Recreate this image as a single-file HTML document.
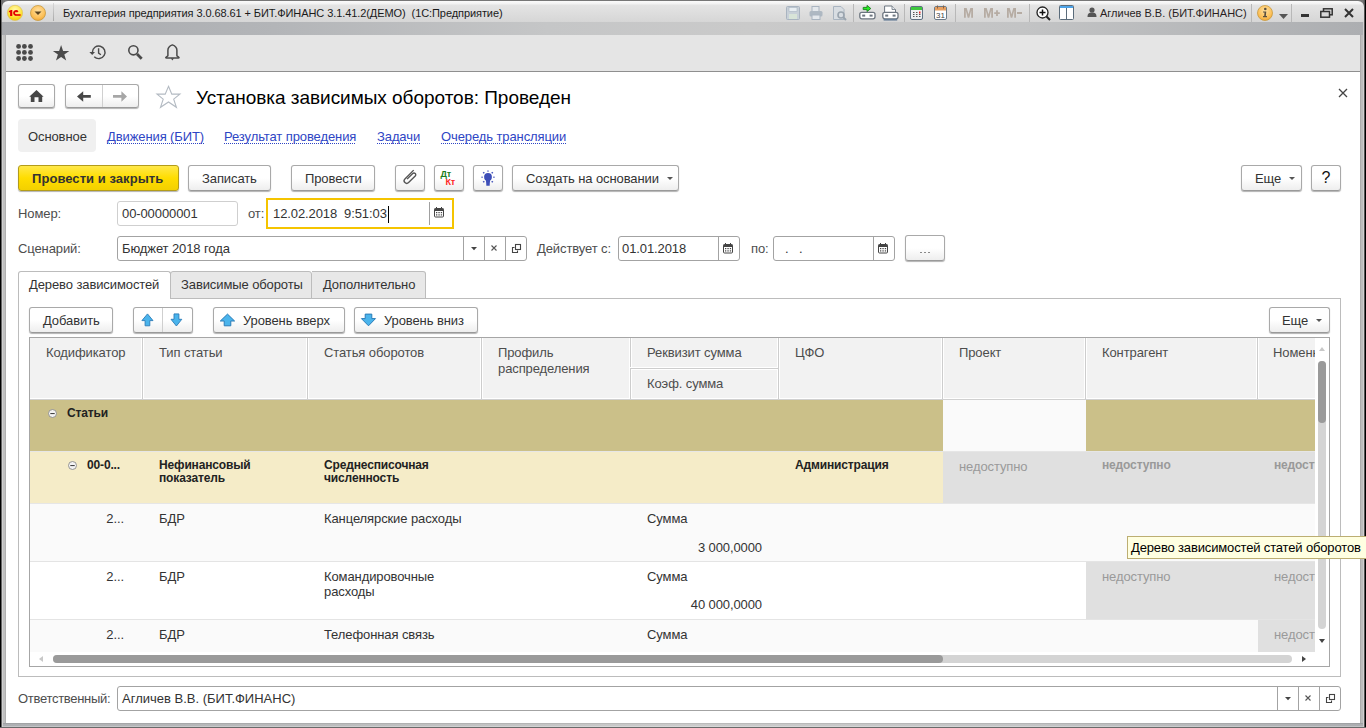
<!DOCTYPE html><html><head><meta charset="utf-8"><style>
*{margin:0;padding:0;box-sizing:border-box}
html,body{width:1366px;height:728px;overflow:hidden;background:#fff;font-family:"Liberation Sans",sans-serif}
.t{position:absolute;white-space:nowrap;letter-spacing:-.1px}
.btn{position:absolute;border:1px solid #a9a9a9;border-bottom-color:#9a9a9a;border-radius:3px;background:linear-gradient(#fff 0%,#fff 50%,#eeeeee 100%);box-shadow:0 1px 1px rgba(0,0,0,.30)}
.fld{position:absolute;border:1px solid #a3a3a3;border-radius:3px;background:#fff}
.dot{background-image:linear-gradient(to right,currentColor 50%,transparent 50%);background-size:2px 1px;background-repeat:repeat-x;background-position:0 100%}
svg{position:absolute;overflow:visible}
</style></head><body>
<div style="position:absolute;left:0px;top:0px;width:1366px;height:728px;background:#6e6e6e"></div>
<div style="position:absolute;left:3px;top:0px;width:1360px;height:35px;background:#777"></div>
<div style="position:absolute;left:2px;top:1px;width:1362px;height:21px;border-radius:6px 6px 0 0;background:linear-gradient(#fbfbfb 0px,#f2f2f2 3px,#e4e4e4 4px,#d6d6d6 21px)"></div>
<div style="position:absolute;left:2px;top:22px;width:1362px;height:13px;background:linear-gradient(to right,#a8aaae 0%,#b3b5b8 20%,#c5c6c7 40%,#cacaca 55%,#c3c4c5 75%,#acaeb1 100%)"></div>
<div style="position:absolute;left:0px;top:0px;width:1px;height:728px;background:#000"></div>
<div style="position:absolute;left:1px;top:22px;width:1px;height:706px;background:#666"></div>
<div style="position:absolute;left:2px;top:35px;width:1px;height:692px;background:#d0d0d0"></div>
<div style="position:absolute;left:3px;top:35px;width:2px;height:692px;background:#c0c0c0"></div>
<div style="position:absolute;left:5px;top:35px;width:1px;height:692px;background:#b0b0b0"></div>
<div style="position:absolute;left:1360px;top:35px;width:1px;height:692px;background:#acacac"></div>
<div style="position:absolute;left:1361px;top:35px;width:2px;height:692px;background:#bcbcbc"></div>
<div style="position:absolute;left:1363px;top:22px;width:1px;height:706px;background:#d0d0d0"></div>
<div style="position:absolute;left:1364px;top:0px;width:1px;height:728px;background:#555"></div>
<div style="position:absolute;left:1365px;top:0px;width:1px;height:728px;background:#000"></div>
<div style="position:absolute;left:3px;top:723px;width:1360px;height:4px;background:linear-gradient(to right,#aeb0b3 0%,#bcbdbe 25%,#cbcbcb 50%,#c4c5c6 75%,#acaeb1 100%)"></div>
<div style="position:absolute;left:3px;top:723px;width:1360px;height:1px;background:rgba(0,0,0,.08)"></div>
<div style="position:absolute;left:3px;top:726px;width:1360px;height:1px;background:rgba(255,255,255,.25)"></div>
<div style="position:absolute;left:0px;top:727px;width:1366px;height:1px;background:#6a6a6a"></div>
<div style="position:absolute;left:6px;top:35px;width:1354px;height:688px;background:#fff"></div>
<svg style="left:7px;top:5px" width="16" height="16" viewBox="0 0 16 16"><defs><radialGradient id="yl" cx="50%" cy="30%" r="70%"><stop offset="0" stop-color="#fff8b0"/><stop offset=".55" stop-color="#ffe84a"/><stop offset="1" stop-color="#f5cc00"/></radialGradient></defs><circle cx="8" cy="7.9" r="7.6" fill="url(#yl)" stroke="#dcc060" stroke-width=".7"/><path d="M1.9 6 L4 4.9 L5.3 4.9 L5.3 10.9 L3.1 10.9 L3.1 6.9 L1.9 7.4Z" fill="#e40000"/><path d="M10.75 6.9 A2 2 0 1 0 9.1 9.95" fill="none" stroke="#e40000" stroke-width="1.85"/><rect x="9" y="9.2" width="4.6" height="1.6" fill="#e40000"/></svg>
<svg style="left:30px;top:5px" width="16" height="16" viewBox="0 0 16 16"><defs><radialGradient id="og" cx="50%" cy="35%" r="65%"><stop offset="0" stop-color="#ffe0a0"/><stop offset=".7" stop-color="#fcc15a"/><stop offset="1" stop-color="#f0a838"/></radialGradient></defs><circle cx="8" cy="8" r="7.5" fill="url(#og)" stroke="#c89a40" stroke-width=".8"/><path d="M4.5 6.5 L11.5 6.5 L8 10Z" fill="#5a4420"/></svg>
<div style="position:absolute;left:53px;top:3px;width:1px;height:18px;background:linear-gradient(#d8d8d8,#a8a8a8)"></div>
<div class="t" style="left:63px;top:7.69px;font-size:11px;line-height:11px;color:#1a1a1a;font-weight:normal;letter-spacing:-.08px">Бухгалтерия предприятия 3.0.68.61 + БИТ.ФИНАНС 3.1.41.2(ДЕМО)&nbsp; (1С:Предприятие)</div>
<svg style="left:786px;top:6px" width="14" height="14" viewBox="0 0 14 14"><rect x=".5" y=".5" width="13" height="13" rx="1" fill="#c8d0d8" stroke="#a9b4c0"/><rect x="3" y="1.5" width="8" height="4" fill="#e8eef2" stroke="#a9b4c0" stroke-width=".6"/><rect x="3" y="8" width="8" height="5" fill="#d8e4d8"/></svg>
<svg style="left:809px;top:6px" width="14" height="14" viewBox="0 0 14 14"><rect x="3" y=".5" width="7" height="5" fill="#e4e8ec" stroke="#a9b4c0"/><rect x=".5" y="5" width="13" height="5.5" rx="1.5" fill="#aeb8c2"/><rect x="3" y="9" width="8" height="4.5" fill="#e4e8ec" stroke="#a9b4c0"/></svg>
<svg style="left:833px;top:6px" width="15" height="15" viewBox="0 0 15 15"><path d="M.5 .5 H8 L11 3.5 V13.5 H.5Z" fill="#d8dde2" stroke="#a9b4c0"/><circle cx="8" cy="9" r="3" fill="none" stroke="#9aa4ae" stroke-width="1.6"/><path d="M10 11 L13 14" stroke="#9aa4ae" stroke-width="2"/></svg>
<div style="position:absolute;left:853px;top:4px;width:1px;height:18px;background:#b8b8b8"></div>
<svg style="left:859px;top:5px" width="17" height="15" viewBox="0 0 17 15"><path d="M4.2 2.4 H8 V.4 L11.8 3.5 L8 6.6 V4.6 H4.2Z" fill="#25f025" stroke="#1a7a1a" stroke-width=".9" stroke-linejoin="round"/><rect x=".8" y="7.3" width="15.2" height="6.5" rx="2" fill="#fff" stroke="#6d7680" stroke-width="1.3"/><rect x="3.2" y="9.6" width="3" height="2" fill="#6d7680"/><rect x="10.6" y="9.6" width="3" height="2" fill="#6d7680"/></svg>
<svg style="left:882px;top:5px" width="17" height="16" viewBox="0 0 17 16"><path d="M2.6 1 H10 L13.5 4.5 V7.5 H2.6Z" fill="#fff" stroke="#6d7680" stroke-width="1"/><path d="M10 1 V4.5 H13.5" fill="#e8ecf0" stroke="#6d7680" stroke-width=".8"/><rect x=".8" y="7.3" width="15.2" height="6.5" rx="2" fill="#fff" stroke="#6d7680" stroke-width="1.3"/><rect x="3.2" y="9.6" width="3" height="2" fill="#6d7680"/><rect x="10.6" y="9.6" width="3" height="2" fill="#6d7680"/><rect x="1.6" y="13.8" width="13.6" height="1.8" fill="#6a8098"/></svg>
<div style="position:absolute;left:904px;top:4px;width:1px;height:18px;background:#b8b8b8"></div>
<svg style="left:910px;top:6px" width="13" height="14" viewBox="0 0 13 14"><rect x=".5" y=".5" width="12" height="13" rx="1.5" fill="#eef0f2" stroke="#5f7080"/><rect x="1" y="1" width="11" height="3" fill="#3fc83f"/><g fill="#555"><rect x="3" y="6" width="1.5" height="1"/><rect x="6" y="6" width="1.5" height="1"/><rect x="3" y="8" width="1.5" height="1"/><rect x="6" y="8" width="1.5" height="1"/><rect x="9" y="8" width="1.5" height="1"/><rect x="3" y="10" width="1.5" height="1"/><rect x="6" y="10" width="1.5" height="1"/><rect x="9" y="10" width="1.5" height="1"/></g><rect x="9" y="5.5" width="1.5" height="2" fill="#e22"/></svg>
<svg style="left:934px;top:5px" width="13" height="15" viewBox="0 0 13 15"><rect x=".5" y="1.5" width="12" height="13" rx="1.5" fill="#fff" stroke="#6a7a88"/><rect x="1" y="2" width="11" height="3.5" fill="#e8a060"/><rect x="3" y=".5" width="1" height="3" fill="#8a6040"/><rect x="9" y=".5" width="1" height="3" fill="#8a6040"/><text x="6.5" y="12.8" font-size="8" text-anchor="middle" fill="#444" font-family="Liberation Sans">31</text></svg>
<div style="position:absolute;left:955px;top:4px;width:1px;height:18px;background:#b8b8b8"></div>
<svg style="left:964px;top:8px" width="9" height="10" viewBox="0 0 9 10"><path d="M0 9.7 V0 H2.7 L4.5 6.2 L6.3 0 H9 V9.7 H7.2 V2.6 L5.3 9.7 H3.7 L1.8 2.6 V9.7Z" fill="#b6aca3"/></svg>
<svg style="left:984px;top:8px" width="17" height="10" viewBox="0 0 17 10"><path d="M0 9.7 V0 H2.7 L4.5 6.2 L6.3 0 H9 V9.7 H7.2 V2.6 L5.3 9.7 H3.7 L1.8 2.6 V9.7Z" fill="#b6aca3"/><path d="M10.2 4.3 H15.8 V6.1 H10.2Z M12.1 2.2 H13.9 V8 H12.1Z" fill="#b6aca3"/></svg>
<svg style="left:1007px;top:8px" width="16" height="10" viewBox="0 0 16 10"><path d="M0 9.7 V0 H2.7 L4.5 6.2 L6.3 0 H9 V9.7 H7.2 V2.6 L5.3 9.7 H3.7 L1.8 2.6 V9.7Z" fill="#b6aca3"/><rect x="10" y="4" width="5" height="2" fill="#b6aca3"/></svg>
<div style="position:absolute;left:1029px;top:4px;width:1px;height:18px;background:#b8b8b8"></div>
<svg style="left:1036px;top:6px" width="15" height="15" viewBox="0 0 15 15"><circle cx="6.5" cy="6.5" r="5.5" fill="#fff" stroke="#222" stroke-width="1.3"/><path d="M6.5 3.5 V9.5 M3.5 6.5 H9.5" stroke="#111" stroke-width="1.5"/><path d="M10.5 10.5 L14 14" stroke="#222" stroke-width="2"/></svg>
<svg style="left:1059px;top:5px" width="15" height="15" viewBox="0 0 15 15"><rect x=".5" y=".5" width="14" height="14" rx="1" fill="#fff" stroke="#5a6b7a"/><rect x="1" y="1" width="13" height="2" fill="#4da3e8"/><rect x="7" y="3" width="1" height="11" fill="#5a6b7a"/></svg>
<svg style="left:1087px;top:7px" width="10" height="10" viewBox="0 0 10 10"><circle cx="5" cy="3" r="2.6" fill="#555"/><path d="M0.5 10 C0.5 6.5 2 5.5 5 5.5 C8 5.5 9.5 6.5 9.5 10Z" fill="#555"/></svg>
<div class="t" style="left:1100px;top:7.69px;font-size:11px;line-height:11px;color:#2a1f1f;font-weight:normal;letter-spacing:0">Агличев В.В. (БИТ.ФИНАНС)</div>
<div style="position:absolute;left:1251px;top:4px;width:1px;height:18px;background:#b8b8b8"></div>
<svg style="left:1257px;top:5px" width="16" height="16" viewBox="0 0 16 16"><defs><radialGradient id="og2" cx="50%" cy="35%" r="65%"><stop offset="0" stop-color="#ffe0a0"/><stop offset=".7" stop-color="#fcc15a"/><stop offset="1" stop-color="#f0a838"/></radialGradient></defs><circle cx="8" cy="8" r="7.5" fill="url(#og2)" stroke="#c89a40" stroke-width=".8"/><circle cx="8.3" cy="4" r="1.3" fill="#5a5040"/><path d="M6 6.5 H9.3 L8.8 11 H10 V12.3 H6 V11 H7.2 L7.5 7.6 H6Z" fill="#5a5040"/></svg>
<svg style="left:1279px;top:14px" width="9" height="5" viewBox="0 0 9 5"><path d="M0 0 H9 L4.5 5Z" fill="#555"/></svg>
<div style="position:absolute;left:1291px;top:4px;width:1px;height:18px;background:#b8b8b8"></div>
<div style="position:absolute;left:1301px;top:14px;width:8px;height:3px;background:#333"></div>
<svg style="left:1320px;top:8px" width="13" height="10" viewBox="0 0 13 10"><rect x="3.5" y=".8" width="8.7" height="6" fill="none" stroke="#333" stroke-width="1.5"/><rect x=".8" y="3.5" width="8.7" height="5.7" fill="#d8d8d8" stroke="#333" stroke-width="1.5"/></svg>
<svg style="left:1344px;top:8px" width="10" height="10" viewBox="0 0 10 10"><path d="M1 1 L9 9 M9 1 L1 9" stroke="#333" stroke-width="2"/></svg>
<div style="position:absolute;left:6px;top:35px;width:1354px;height:36px;background:#e5e5e5"></div>
<div style="position:absolute;left:6px;top:71px;width:1354px;height:1px;background:#8f8f8f"></div>
<svg style="left:16px;top:44px" width="17" height="17" viewBox="0 0 17 17"><circle cx="2.6" cy="2.4" r="2.4" fill="#4a4a4a"/><circle cx="2.6" cy="8.4" r="2.4" fill="#4a4a4a"/><circle cx="2.6" cy="14.5" r="2.4" fill="#4a4a4a"/><circle cx="8.4" cy="2.4" r="2.4" fill="#4a4a4a"/><circle cx="8.4" cy="8.4" r="2.4" fill="#4a4a4a"/><circle cx="8.4" cy="14.5" r="2.4" fill="#4a4a4a"/><circle cx="14.5" cy="2.4" r="2.4" fill="#4a4a4a"/><circle cx="14.5" cy="8.4" r="2.4" fill="#4a4a4a"/><circle cx="14.5" cy="14.5" r="2.4" fill="#4a4a4a"/></svg>
<svg style="left:53px;top:45px" width="17" height="16" viewBox="0 0 17 16"><path d="M8.1 0 L10.1 5.9 L16.3 5.9 L11.3 9.6 L13.2 15.6 L8.1 11.9 L3 15.6 L4.9 9.6 L-0.1 5.9 L6.1 5.9Z" fill="#4a4a4a"/></svg>
<svg style="left:89px;top:45px" width="17" height="16" viewBox="0 0 17 16"><path d="M3.4 7.3 A6.3 6.3 0 1 1 5.25 11.75" fill="none" stroke="#4a4a4a" stroke-width="1.4"/><path d="M.4 6.9 L6 6.9 L3.2 9.9Z" fill="#4a4a4a"/><path d="M9.6 3.3 V8.1 L11.9 9.7" fill="none" stroke="#4a4a4a" stroke-width="1.4"/></svg>
<svg style="left:127px;top:44px" width="17" height="17" viewBox="0 0 17 17"><circle cx="6.4" cy="6.3" r="4.6" fill="none" stroke="#4a4a4a" stroke-width="1.6"/><path d="M10 10 L14.7 14.7" stroke="#4a4a4a" stroke-width="2.8"/></svg>
<svg style="left:165px;top:44px" width="15" height="17" viewBox="0 0 15 17"><path d="M2.9 11.8 V6.2 C2.9 3.8 5 1.8 7.4 .9 C9.8 1.8 11.9 3.8 11.9 6.2 V11.8 L13.6 13 C14.5 13.7 14.1 13.9 13.3 13.9 H1.5 C.7 13.9 .3 13.7 1.2 13 Z" fill="none" stroke="#4a4a4a" stroke-width="1.5" stroke-linejoin="round"/><path d="M5.8 14.3 L7.4 16.5 L9 14.3Z" fill="#4a4a4a"/></svg>
<div class="btn" style="left:18px;top:84px;width:37px;height:24px;"></div>
<svg style="left:29px;top:90px" width="15" height="12" viewBox="0 0 15 12"><path d="M7.5 0 L14.6 6.7 L13.2 6.7 L13.2 11.9 L9.5 11.9 L9.5 7.3 L5.5 7.3 L5.5 11.9 L1.8 11.9 L1.8 6.7 L.2 6.7Z" fill="#474747"/></svg>
<div class="btn" style="left:65px;top:84px;width:74px;height:24px;"></div>
<div style="position:absolute;left:102px;top:85px;width:1px;height:22px;background:#d0d0d0"></div>
<svg style="left:77px;top:91px" width="15" height="11" viewBox="0 0 15 11"><path d="M0 5.5 L6.2 .2 L6.2 3.9 L13.8 3.9 L13.8 6.8 L6.2 6.8 L6.2 10.7Z" fill="#474747"/></svg>
<svg style="left:113px;top:91px" width="15" height="11" viewBox="0 0 15 11"><path d="M14 5.5 L8.4 .2 L8.4 3.9 L0 3.9 L0 6.8 L8.4 6.8 L8.4 10.7Z" fill="#a6a6a6"/></svg>
<svg style="left:157px;top:86px" width="23" height="22" viewBox="0 0 23 22"><path d="M11.5 .3 L14.8 8.1 L22.9 8.1 L16.7 13.1 L19.4 21.3 L11.5 16 L3.5 21.3 L6.2 13.1 L0 8.1 L8.2 8.1Z" fill="none" stroke="#b3bac2" stroke-width="1.1" stroke-linejoin="miter"/></svg>
<div class="t" style="left:196px;top:87.62px;font-size:19px;line-height:19px;color:#000;font-weight:normal;letter-spacing:-.03px">Установка зависимых оборотов: Проведен</div>
<svg style="left:1338px;top:88px" width="10" height="10" viewBox="0 0 10 10"><path d="M1 1 L9 9 M9 1 L1 9" stroke="#444" stroke-width="1.3"/></svg>
<div style="position:absolute;left:18px;top:119px;width:78px;height:33px;background:#f0f0f0;border-radius:4px"></div>
<div class="t" style="left:28px;top:129.80px;font-size:13px;line-height:13px;color:#333;font-weight:normal;">Основное</div>
<div class="t dot" style="left:107px;top:129.80px;font-size:13px;line-height:14px;height:14px;color:#2e45c4">Движения (БИТ)</div>
<div class="t dot" style="left:224px;top:129.80px;font-size:13px;line-height:14px;height:14px;color:#2e45c4">Результат проведения</div>
<div class="t dot" style="left:377px;top:129.80px;font-size:13px;line-height:14px;height:14px;color:#2e45c4">Задачи</div>
<div class="t dot" style="left:441px;top:129.80px;font-size:13px;line-height:14px;height:14px;color:#2e45c4">Очередь трансляции</div>
<div style="position:absolute;left:18px;top:165px;width:161px;height:26px;border:1px solid #b39c1a;border-radius:3px;background:linear-gradient(#ffe84a,#ffdd00 50%,#f3d000);box-shadow:0 1px 1px rgba(0,0,0,.3)"></div>
<div class="t" style="left:32px;top:172.00px;font-size:13px;line-height:13px;color:#333;font-weight:bold;letter-spacing:.05px">Провести и закрыть</div>
<div class="btn" style="left:188px;top:165px;width:83px;height:26px;"></div>
<div class="t" style="left:202px;top:172.00px;font-size:13px;line-height:13px;color:#333;font-weight:normal;">Записать</div>
<div class="btn" style="left:291px;top:165px;width:84px;height:26px;"></div>
<div class="t" style="left:305px;top:172.00px;font-size:13px;line-height:13px;color:#333;font-weight:normal;">Провести</div>
<div class="btn" style="left:395px;top:165px;width:30px;height:26px;"></div>
<svg style="left:400px;top:167px" width="20" height="20" viewBox="0 0 20 20"><g transform="translate(10,10.5) rotate(45)"><path d="M-2.6 -7.8 V4.6 A2.6 2.6 0 0 0 2.6 4.6 V-4.8 A1.75 1.75 0 0 0 -0.9 -4.8 V3.2" fill="none" stroke="#555" stroke-width="1.35"/></g></svg>
<div class="btn" style="left:434px;top:165px;width:30px;height:26px;"></div>
<div class="t" style="left:440.5px;top:169.5px;font-size:9px;line-height:9px;font-weight:bold;color:#1a7d1a;letter-spacing:-.2px">Дт</div>
<div class="t" style="left:445.5px;top:177.5px;font-size:9px;line-height:9px;font-weight:bold;color:#ff2424;letter-spacing:-.2px">Кт</div>
<div class="btn" style="left:473px;top:165px;width:30px;height:26px;"></div>
<svg style="left:478px;top:169px" width="20" height="18" viewBox="0 0 20 18"><g fill="#3d4eb8"><circle cx="10" cy="8" r="3.9"/><path d="M7.8 10 H12.2 L11.7 15.5 H8.3Z"/><rect x="8.2" y="15" width="3.6" height="1.8" rx=".9"/><rect x="9.3" y="1.4" width="1.4" height="1.4" opacity=".8"/><rect x="5" y="3" width="1.5" height="1.5" transform="rotate(45 5.75 3.75)"/><rect x="13.5" y="3" width="1.5" height="1.5" transform="rotate(45 14.25 3.75)"/><rect x="3.2" y="7.6" width="1.8" height="1.2" opacity=".75"/><rect x="15" y="7.6" width="1.8" height="1.2" opacity=".75"/><rect x="5" y="12" width="1.5" height="1.5" transform="rotate(45 5.75 12.75)"/><rect x="13.5" y="12" width="1.5" height="1.5" transform="rotate(45 14.25 12.75)"/></g></svg>
<div class="btn" style="left:512px;top:165px;width:167px;height:26px;"></div>
<div class="t" style="left:526px;top:172.00px;font-size:13px;line-height:13px;color:#333;font-weight:normal;">Создать на основании</div>
<svg style="left:667px;top:177px" width="6" height="3" viewBox="0 0 6 3"><path d="M0 0 H6 L3 3Z" fill="#555"/></svg>
<div class="btn" style="left:1241px;top:165px;width:61px;height:26px;"></div>
<div class="t" style="left:1255px;top:172.00px;font-size:13px;line-height:13px;color:#333;font-weight:normal;">Еще</div>
<svg style="left:1289px;top:177px" width="6" height="3" viewBox="0 0 6 3"><path d="M0 0 H6 L3 3Z" fill="#555"/></svg>
<div class="btn" style="left:1311px;top:165px;width:30px;height:26px;"></div>
<div class="t" style="left:1321.5px;top:170.46px;font-size:16px;line-height:16px;color:#111;font-weight:normal;">?</div>
<div class="t" style="left:18px;top:207.00px;font-size:13px;line-height:13px;color:#4d4d4d;font-weight:normal;">Номер:</div>
<div class="fld" style="left:117px;top:201px;width:121px;height:25px;border-color:#cfcfcf"></div>
<div class="t" style="left:122px;top:207.00px;font-size:13px;line-height:13px;color:#333;font-weight:normal;">00-00000001</div>
<div class="t" style="left:248px;top:207.00px;font-size:13px;line-height:13px;color:#4d4d4d;font-weight:normal;">от:</div>
<div style="position:absolute;left:266px;top:198px;width:188px;height:31px;border:2px solid #f5c400"></div>
<div class="t" style="left:273px;top:207.00px;font-size:13px;line-height:13px;color:#333;font-weight:normal;">12.02.2018&nbsp; 9:51:03</div>
<div style="position:absolute;left:388px;top:206px;width:1px;height:17px;background:#000"></div>
<div style="position:absolute;left:429px;top:202px;width:1px;height:23px;background:#a0a0a0"></div>
<svg style="left:434px;top:207px" width="10" height="11" viewBox="0 0 10 11"><rect x=".5" y="1.5" width="9" height="8.5" rx="1" fill="none" stroke="#444" stroke-width="1"/><rect x=".5" y="1.5" width="9" height="2.5" fill="#444"/><rect x="2" y="0" width="1" height="2" fill="#444"/><rect x="7" y="0" width="1" height="2" fill="#444"/><g fill="#444"><rect x="2" y="5" width="1.3" height="1.2"/><rect x="4.4" y="5" width="1.3" height="1.2"/><rect x="6.8" y="5" width="1.3" height="1.2"/><rect x="2" y="7.3" width="1.3" height="1.2"/><rect x="4.4" y="7.3" width="1.3" height="1.2"/><rect x="6.8" y="7.3" width="1.3" height="1.2"/></g></svg>
<div class="t" style="left:18px;top:242.00px;font-size:13px;line-height:13px;color:#4d4d4d;font-weight:normal;">Сценарий:</div>
<div class="fld" style="left:117px;top:236px;width:410px;height:25px"></div>
<div class="t" style="left:122px;top:242.00px;font-size:13px;line-height:13px;color:#333;font-weight:normal;">Бюджет 2018 года</div>
<div style="position:absolute;left:463px;top:237px;width:1px;height:23px;background:#a3a3a3"></div>
<div style="position:absolute;left:484px;top:237px;width:1px;height:23px;background:#a3a3a3"></div>
<div style="position:absolute;left:505px;top:237px;width:1px;height:23px;background:#a3a3a3"></div>
<svg style="left:470.5px;top:247px" width="6" height="3" viewBox="0 0 6 3"><path d="M0 0 H6 L3 3.2Z" fill="#444"/></svg>
<svg style="left:491px;top:245px" width="6" height="6" viewBox="0 0 6 6"><path d="M.5 .5 L5.5 5.5 M5.5 .5 L.5 5.5" stroke="#555" stroke-width="1.1"/></svg>
<svg style="left:511px;top:243px" width="11" height="11" viewBox="0 0 11 11"><rect x="4.5" y="1.5" width="5" height="5" fill="none" stroke="#444" stroke-width="1.1"/><path d="M3.5 4.5 H1.5 V9.5 H6.5 V7.5" fill="none" stroke="#444" stroke-width="1.1"/></svg>
<div class="t" style="left:537px;top:242.00px;font-size:13px;line-height:13px;color:#4d4d4d;font-weight:normal;">Действует с:</div>
<div class="fld" style="left:618px;top:236px;width:122px;height:25px"></div>
<div class="t" style="left:622px;top:242.00px;font-size:13px;line-height:13px;color:#333;font-weight:normal;">01.01.2018</div>
<div style="position:absolute;left:718px;top:237px;width:1px;height:23px;background:#a3a3a3"></div>
<svg style="left:723px;top:243px" width="10" height="11" viewBox="0 0 10 11"><rect x=".5" y="1.5" width="9" height="8.5" rx="1" fill="none" stroke="#444" stroke-width="1"/><rect x=".5" y="1.5" width="9" height="2.5" fill="#444"/><rect x="2" y="0" width="1" height="2" fill="#444"/><rect x="7" y="0" width="1" height="2" fill="#444"/><g fill="#444"><rect x="2" y="5" width="1.3" height="1.2"/><rect x="4.4" y="5" width="1.3" height="1.2"/><rect x="6.8" y="5" width="1.3" height="1.2"/><rect x="2" y="7.3" width="1.3" height="1.2"/><rect x="4.4" y="7.3" width="1.3" height="1.2"/><rect x="6.8" y="7.3" width="1.3" height="1.2"/></g></svg>
<div class="t" style="left:751px;top:242.00px;font-size:13px;line-height:13px;color:#4d4d4d;font-weight:normal;">по:</div>
<div class="fld" style="left:773px;top:236px;width:122px;height:25px"></div>
<div class="t" style="left:785px;top:242.00px;font-size:13px;line-height:13px;color:#333;font-weight:normal;">.&nbsp;&nbsp; .</div>
<div style="position:absolute;left:873px;top:237px;width:1px;height:23px;background:#a3a3a3"></div>
<svg style="left:878px;top:243px" width="10" height="11" viewBox="0 0 10 11"><rect x=".5" y="1.5" width="9" height="8.5" rx="1" fill="none" stroke="#444" stroke-width="1"/><rect x=".5" y="1.5" width="9" height="2.5" fill="#444"/><rect x="2" y="0" width="1" height="2" fill="#444"/><rect x="7" y="0" width="1" height="2" fill="#444"/><g fill="#444"><rect x="2" y="5" width="1.3" height="1.2"/><rect x="4.4" y="5" width="1.3" height="1.2"/><rect x="6.8" y="5" width="1.3" height="1.2"/><rect x="2" y="7.3" width="1.3" height="1.2"/><rect x="4.4" y="7.3" width="1.3" height="1.2"/><rect x="6.8" y="7.3" width="1.3" height="1.2"/></g></svg>
<div class="btn" style="left:905px;top:235px;width:40px;height:26px;"></div>
<div style="position:absolute;left:920px;top:252px;width:2px;height:1px;background:#8a8a8a"></div>
<div style="position:absolute;left:924px;top:252px;width:2px;height:1px;background:#8a8a8a"></div>
<div style="position:absolute;left:928px;top:252px;width:2px;height:1px;background:#8a8a8a"></div>
<div style="position:absolute;left:18px;top:298px;width:1323px;height:379px;border:1px solid #bcbcbc;border-top:none"></div>
<div style="position:absolute;left:170px;top:298px;width:1171px;height:1px;background:#bcbcbc"></div>
<div style="position:absolute;left:170px;top:271px;width:142px;height:28px;border:1px solid #bcbcbc;border-radius:3px 3px 0 0;background:#e8e8e8"></div>
<div style="position:absolute;left:312px;top:271px;width:114px;height:28px;border:1px solid #bcbcbc;border-left:none;border-radius:0 3px 0 0;background:#e8e8e8"></div>
<div style="position:absolute;left:18px;top:271px;width:153px;height:28px;border:1px solid #bcbcbc;border-bottom:none;border-radius:3px 3px 0 0;background:#fff"></div>
<div class="t" style="left:29px;top:278.00px;font-size:13px;line-height:13px;color:#333;font-weight:normal;">Дерево зависимостей</div>
<div class="t" style="left:181px;top:278.00px;font-size:13px;line-height:13px;color:#333;font-weight:normal;">Зависимые обороты</div>
<div class="t" style="left:323px;top:278.00px;font-size:13px;line-height:13px;color:#333;font-weight:normal;">Дополнительно</div>
<div class="btn" style="left:29px;top:307px;width:84px;height:26px;"></div>
<div class="t" style="left:43px;top:314.00px;font-size:13px;line-height:13px;color:#333;font-weight:normal;">Добавить</div>
<div class="btn" style="left:133px;top:307px;width:60px;height:26px;"></div>
<div style="position:absolute;left:162px;top:308px;width:1px;height:24px;background:#cfcfcf"></div>
<svg style="left:141px;top:313px" width="14" height="14" viewBox="0 0 14 14"><path d="M6.5 .9 L12 7.6 L8.8 7.6 L8.8 12.8 L4.1 12.8 L4.1 7.6 L.9 7.6Z" fill="#4ab4ec" stroke="#2a7cb8" stroke-width=".9" stroke-linejoin="round"/></svg>
<svg style="left:170px;top:313px" width="14" height="14" viewBox="0 0 14 14"><path d="M6.4 13 L11.8 6.3 L8.9 6.3 L8.9 .9 L4 .9 L4 6.3 L1 6.3Z" fill="#4ab4ec" stroke="#2a7cb8" stroke-width=".9" stroke-linejoin="round"/></svg>
<div class="btn" style="left:213px;top:307px;width:132px;height:26px;"></div>
<svg style="left:219px;top:313px" width="17" height="14" viewBox="0 0 17 14"><path d="M8.5 1.1 L15.6 8 L11.8 8 L11.8 12.8 L5.2 12.8 L5.2 8 L1.3 8Z" fill="#4ab4ec" stroke="#2a7cb8" stroke-width="1" stroke-linejoin="round"/></svg>
<div class="t" style="left:243px;top:314.00px;font-size:13px;line-height:13px;color:#333;font-weight:normal;">Уровень вверх</div>
<div class="btn" style="left:354px;top:307px;width:124px;height:26px;"></div>
<svg style="left:360px;top:313px" width="17" height="14" viewBox="0 0 17 14"><path d="M8.5 12.8 L15.5 5.6 L11.8 5.6 L11.8 1.1 L5.2 1.1 L5.2 5.6 L1.4 5.6Z" fill="#4ab4ec" stroke="#2a7cb8" stroke-width="1" stroke-linejoin="round"/></svg>
<div class="t" style="left:384px;top:314.00px;font-size:13px;line-height:13px;color:#333;font-weight:normal;">Уровень вниз</div>
<div class="btn" style="left:1269px;top:307px;width:61px;height:26px;"></div>
<div class="t" style="left:1282px;top:314.00px;font-size:13px;line-height:13px;color:#333;font-weight:normal;">Еще</div>
<svg style="left:1316px;top:319px" width="6" height="3" viewBox="0 0 6 3"><path d="M0 0 H6 L3 3Z" fill="#555"/></svg>
<div style="position:absolute;left:29px;top:337px;width:1301px;height:330px;border:1px solid #a6a6a6;background:#fff;overflow:hidden">
<div style="position:absolute;left:0;top:0;width:1285px;height:314px;overflow:hidden">
<div style="position:absolute;left:0px;top:0px;width:1286px;height:61px;background:#f2f2f2"></div>
<div style="position:absolute;left:0px;top:60px;width:1286px;height:1px;background:#fff"></div>
<div style="position:absolute;left:113px;top:0px;width:1px;height:60px;background:#fff"></div>
<div style="position:absolute;left:111px;top:0px;width:1px;height:60px;background:#fff"></div>
<div style="position:absolute;left:112px;top:0px;width:1px;height:61px;background:#cdcdcd"></div>
<div style="position:absolute;left:278px;top:0px;width:1px;height:60px;background:#fff"></div>
<div style="position:absolute;left:276px;top:0px;width:1px;height:60px;background:#fff"></div>
<div style="position:absolute;left:277px;top:0px;width:1px;height:61px;background:#cdcdcd"></div>
<div style="position:absolute;left:452px;top:0px;width:1px;height:60px;background:#fff"></div>
<div style="position:absolute;left:450px;top:0px;width:1px;height:60px;background:#fff"></div>
<div style="position:absolute;left:451px;top:0px;width:1px;height:61px;background:#cdcdcd"></div>
<div style="position:absolute;left:601px;top:0px;width:1px;height:60px;background:#fff"></div>
<div style="position:absolute;left:599px;top:0px;width:1px;height:60px;background:#fff"></div>
<div style="position:absolute;left:600px;top:0px;width:1px;height:61px;background:#cdcdcd"></div>
<div style="position:absolute;left:749px;top:0px;width:1px;height:60px;background:#fff"></div>
<div style="position:absolute;left:747px;top:0px;width:1px;height:60px;background:#fff"></div>
<div style="position:absolute;left:748px;top:0px;width:1px;height:61px;background:#cdcdcd"></div>
<div style="position:absolute;left:913px;top:0px;width:1px;height:60px;background:#fff"></div>
<div style="position:absolute;left:911px;top:0px;width:1px;height:60px;background:#fff"></div>
<div style="position:absolute;left:912px;top:0px;width:1px;height:61px;background:#cdcdcd"></div>
<div style="position:absolute;left:1056px;top:0px;width:1px;height:60px;background:#fff"></div>
<div style="position:absolute;left:1054px;top:0px;width:1px;height:60px;background:#fff"></div>
<div style="position:absolute;left:1055px;top:0px;width:1px;height:61px;background:#cdcdcd"></div>
<div style="position:absolute;left:1228px;top:0px;width:1px;height:60px;background:#fff"></div>
<div style="position:absolute;left:1226px;top:0px;width:1px;height:60px;background:#fff"></div>
<div style="position:absolute;left:1227px;top:0px;width:1px;height:61px;background:#cdcdcd"></div>
<div style="position:absolute;left:600px;top:30px;width:148px;height:1px;background:#cdcdcd"></div>
<div style="position:absolute;left:601px;top:31px;width:147px;height:1px;background:#fff"></div>
<div style="position:absolute;left:600px;top:29px;width:148px;height:1px;background:#fff"></div>
<div style="position:absolute;left:0px;top:61px;width:1286px;height:1px;background:#d0d0d0"></div>
<div class="t" style="left:16px;top:8.00px;font-size:13px;line-height:13px;color:#4d4d4d;font-weight:normal;">Кодификатор</div>
<div class="t" style="left:129px;top:8.00px;font-size:13px;line-height:13px;color:#4d4d4d;font-weight:normal;">Тип статьи</div>
<div class="t" style="left:294px;top:8.00px;font-size:13px;line-height:13px;color:#4d4d4d;font-weight:normal;">Статья оборотов</div>
<div class="t" style="left:468px;top:8.00px;font-size:13px;line-height:13px;color:#4d4d4d;font-weight:normal;">Профиль</div>
<div class="t" style="left:468px;top:24.00px;font-size:13px;line-height:13px;color:#4d4d4d;font-weight:normal;">распределения</div>
<div class="t" style="left:617px;top:8.00px;font-size:13px;line-height:13px;color:#4d4d4d;font-weight:normal;">Реквизит сумма</div>
<div class="t" style="left:617px;top:39.00px;font-size:13px;line-height:13px;color:#4d4d4d;font-weight:normal;">Коэф. сумма</div>
<div class="t" style="left:765px;top:8.00px;font-size:13px;line-height:13px;color:#4d4d4d;font-weight:normal;">ЦФО</div>
<div class="t" style="left:929px;top:8.00px;font-size:13px;line-height:13px;color:#4d4d4d;font-weight:normal;">Проект</div>
<div class="t" style="left:1072px;top:8.00px;font-size:13px;line-height:13px;color:#4d4d4d;font-weight:normal;">Контрагент</div>
<div class="t" style="left:1243px;top:8.00px;font-size:13px;line-height:13px;color:#4d4d4d;font-weight:normal;">Номенклатура</div>
<div style="position:absolute;left:0px;top:62px;width:913px;height:51px;background:#cbc089"></div>
<div style="position:absolute;left:913px;top:62px;width:143px;height:51px;background:#fafafa"></div>
<div style="position:absolute;left:1056px;top:62px;width:230px;height:51px;background:#cbc089"></div>
<div style="position:absolute;left:0px;top:113px;width:1286px;height:1px;background:#e6e6e6"></div>
<svg style="left:18px;top:71px" width="9" height="9"><circle cx="4.5" cy="4.5" r="4" fill="#f4f4f4" stroke="#8a8a8a" stroke-width=".9"/><rect x="2.3" y="4" width="4.4" height="1.1" fill="#444"/></svg>
<div class="t" style="left:37px;top:68.84px;font-size:12px;line-height:12px;color:#222;font-weight:bold;letter-spacing:-.15px">Статьи</div>
<div style="position:absolute;left:0px;top:114px;width:913px;height:51px;background:#f5ecc8"></div>
<div style="position:absolute;left:913px;top:114px;width:373px;height:51px;background:#e0e0e0"></div>
<div style="position:absolute;left:0px;top:165px;width:1286px;height:1px;background:#e6e6e6"></div>
<svg style="left:38px;top:123px" width="9" height="9"><circle cx="4.5" cy="4.5" r="4" fill="#f4f4f4" stroke="#8a8a8a" stroke-width=".9"/><rect x="2.3" y="4" width="4.4" height="1.1" fill="#444"/></svg>
<div class="t" style="left:57px;top:120.84px;font-size:12px;line-height:12px;color:#222;font-weight:bold;letter-spacing:-.15px">00-0...</div>
<div class="t" style="left:129px;top:120.84px;font-size:12px;line-height:12px;color:#222;font-weight:bold;letter-spacing:-.15px">Нефинансовый</div>
<div class="t" style="left:129px;top:133.84px;font-size:12px;line-height:12px;color:#222;font-weight:bold;letter-spacing:-.15px">показатель</div>
<div class="t" style="left:294px;top:120.84px;font-size:12px;line-height:12px;color:#222;font-weight:bold;letter-spacing:-.15px">Среднесписочная</div>
<div class="t" style="left:294px;top:133.84px;font-size:12px;line-height:12px;color:#222;font-weight:bold;letter-spacing:-.15px">численность</div>
<div class="t" style="left:765px;top:120.84px;font-size:12px;line-height:12px;color:#222;font-weight:bold;letter-spacing:-.15px">Администрация</div>
<div class="t" style="left:929px;top:121.50px;font-size:13px;line-height:13px;color:#9a9a9a;font-weight:normal;">недоступно</div>
<div class="t" style="left:1072px;top:120.84px;font-size:12px;line-height:12px;color:#999;font-weight:bold;letter-spacing:-.15px">недоступно</div>
<div class="t" style="left:1244px;top:120.84px;font-size:12px;line-height:12px;color:#999;font-weight:bold;letter-spacing:-.15px">недоступно</div>
<div style="position:absolute;left:0px;top:166px;width:1286px;height:57px;background:#fafafa"></div>
<div style="position:absolute;left:0px;top:223px;width:1286px;height:1px;background:#e4e4e4"></div>
<div class="t" style="left:-206px;width:300px;text-align:right;top:174.00px;font-size:13px;line-height:13px;color:#333;font-weight:normal;">2...</div>
<div class="t" style="left:129px;top:174.00px;font-size:13px;line-height:13px;color:#333;font-weight:normal;">БДР</div>
<div class="t" style="left:294px;top:174.00px;font-size:13px;line-height:13px;color:#333;font-weight:normal;">Канцелярские расходы</div>
<div class="t" style="left:617px;top:174.00px;font-size:13px;line-height:13px;color:#333;font-weight:normal;">Сумма</div>
<div class="t" style="left:432px;width:300px;text-align:right;top:202.60px;font-size:13px;line-height:13px;color:#333;font-weight:normal;">3 000,0000</div>
<div style="position:absolute;left:0px;top:224px;width:1286px;height:57px;background:#fff"></div>
<div style="position:absolute;left:1056px;top:224px;width:230px;height:57px;background:#e0e0e0"></div>
<div style="position:absolute;left:0px;top:281px;width:1286px;height:1px;background:#e4e4e4"></div>
<div class="t" style="left:-206px;width:300px;text-align:right;top:232.00px;font-size:13px;line-height:13px;color:#333;font-weight:normal;">2...</div>
<div class="t" style="left:129px;top:232.00px;font-size:13px;line-height:13px;color:#333;font-weight:normal;">БДР</div>
<div class="t" style="left:294px;top:232.00px;font-size:13px;line-height:13px;color:#333;font-weight:normal;">Командировочные</div>
<div class="t" style="left:294px;top:247.30px;font-size:13px;line-height:13px;color:#333;font-weight:normal;">расходы</div>
<div class="t" style="left:617px;top:232.00px;font-size:13px;line-height:13px;color:#333;font-weight:normal;">Сумма</div>
<div class="t" style="left:432px;width:300px;text-align:right;top:260.40px;font-size:13px;line-height:13px;color:#333;font-weight:normal;">40 000,0000</div>
<div class="t" style="left:1072px;top:232.00px;font-size:13px;line-height:13px;color:#9a9a9a;font-weight:normal;">недоступно</div>
<div class="t" style="left:1244px;top:232.00px;font-size:13px;line-height:13px;color:#9a9a9a;font-weight:normal;">недоступно</div>
<div style="position:absolute;left:0px;top:282px;width:1286px;height:40px;background:#fafafa"></div>
<div style="position:absolute;left:1228px;top:282px;width:58px;height:40px;background:#e0e0e0"></div>
<div class="t" style="left:-206px;width:300px;text-align:right;top:290.00px;font-size:13px;line-height:13px;color:#333;font-weight:normal;">2...</div>
<div class="t" style="left:129px;top:290.00px;font-size:13px;line-height:13px;color:#333;font-weight:normal;">БДР</div>
<div class="t" style="left:294px;top:290.00px;font-size:13px;line-height:13px;color:#333;font-weight:normal;">Телефонная связь</div>
<div class="t" style="left:617px;top:290.00px;font-size:13px;line-height:13px;color:#333;font-weight:normal;">Сумма</div>
<div class="t" style="left:1244px;top:290.00px;font-size:13px;line-height:13px;color:#9a9a9a;font-weight:normal;">недоступно</div>
</div>
<div style="position:absolute;left:0px;top:314px;width:1300px;height:15px;background:#fff"></div>
<svg style="left:9px;top:318px" width="5" height="7"><path d="M4 0 V6 L0 3Z" fill="#c8c8c8"/></svg>
<div style="position:absolute;left:23px;top:317px;width:1239px;height:8px;background:#d4d4d4;border-radius:4px"></div>
<div style="position:absolute;left:23px;top:317px;width:890px;height:8px;background:#9a9a9a;border-radius:4px"></div>
<svg style="left:1272px;top:318px" width="5" height="7"><path d="M0 0 V6 L4 3Z" fill="#444"/></svg>
<div style="position:absolute;left:1286px;top:0px;width:14px;height:314px;background:#fff"></div>
<svg style="left:1289px;top:9px" width="7" height="5"><path d="M0 4 H6 L3 0Z" fill="#c8c8c8"/></svg>
<div style="position:absolute;left:1288px;top:23px;width:8px;height:268px;background:#d4d4d4;border-radius:4px"></div>
<div style="position:absolute;left:1288px;top:23px;width:8px;height:62px;background:#9a9a9a;border-radius:4px"></div>
<svg style="left:1289px;top:301px" width="7" height="5"><path d="M0 0 H6 L3 4Z" fill="#444"/></svg>
</div>
<div class="t" style="left:18px;top:692.00px;font-size:13px;line-height:13px;color:#4d4d4d;font-weight:normal;letter-spacing:-.3px">Ответственный:</div>
<div class="fld" style="left:117px;top:686px;width:1224px;height:25px"></div>
<div class="t" style="left:122px;top:692.00px;font-size:13px;line-height:13px;color:#333;font-weight:normal;letter-spacing:0">Агличев В.В. (БИТ.ФИНАНС)</div>
<div style="position:absolute;left:1277px;top:687px;width:1px;height:23px;background:#a3a3a3"></div>
<div style="position:absolute;left:1298px;top:687px;width:1px;height:23px;background:#a3a3a3"></div>
<div style="position:absolute;left:1319px;top:687px;width:1px;height:23px;background:#a3a3a3"></div>
<svg style="left:1284.5px;top:697px" width="6" height="3" viewBox="0 0 6 3"><path d="M0 0 H6 L3 3.2Z" fill="#444"/></svg>
<svg style="left:1305px;top:695px" width="6" height="6" viewBox="0 0 6 6"><path d="M.5 .5 L5.5 5.5 M5.5 .5 L.5 5.5" stroke="#555" stroke-width="1.1"/></svg>
<svg style="left:1325px;top:693px" width="11" height="11" viewBox="0 0 11 11"><rect x="4.5" y="1.5" width="5" height="5" fill="none" stroke="#444" stroke-width="1.1"/><path d="M3.5 4.5 H1.5 V9.5 H6.5 V7.5" fill="none" stroke="#444" stroke-width="1.1"/></svg>
<div style="position:absolute;left:1127px;top:536px;width:245px;height:23px;border:1px solid #bcae72;background:#ffffe1"></div>
<div class="t" style="left:1131px;top:540.80px;font-size:13px;line-height:13px;color:#000;font-weight:normal;letter-spacing:-.15px">Дерево зависимостей статей оборотов</div>
</body></html>
